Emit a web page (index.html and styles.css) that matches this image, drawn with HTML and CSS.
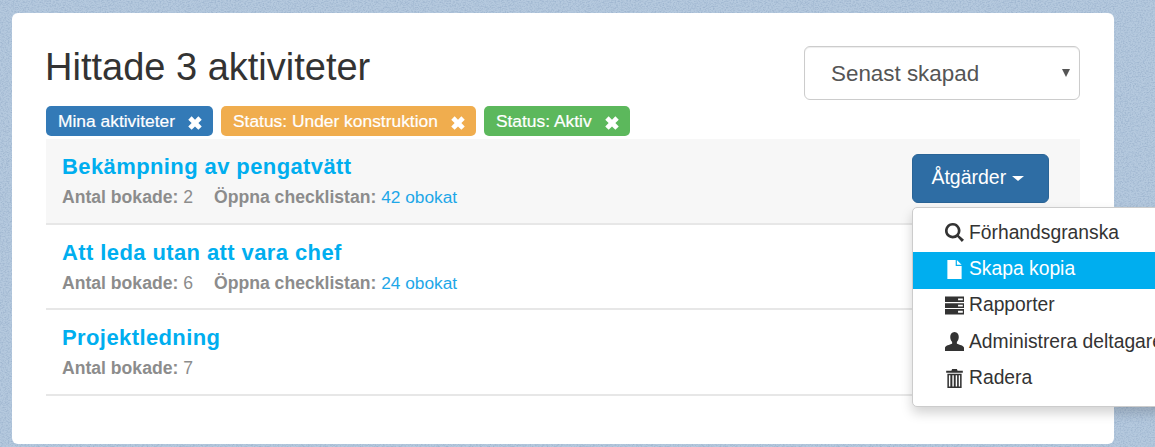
FILE: index.html
```html
<!DOCTYPE html>
<html lang="sv">
<head>
    <meta charset="UTF-8">
    <meta name="viewport" content="width=device-width, initial-scale=1.0">
    <title>Aktiviteter</title>
    <link rel="stylesheet" href="styles.css">
</head>
<body>
    <div class="card">
        <div class="top">
            <h1>Hittade 3 aktiviteter</h1>
            <div class="sort">
                <select>
                    <option>Senast skapad</option>
                </select>
            </div>
        </div>

        <div class="tags">
            <span class="tag tag-blue">Mina aktiviteter <svg class="x" viewBox="0 0 16 16"><path d="M2 5l3-3 3 3 3-3 3 3-3 3 3 3-3 3-3-3-3 3-3-3 3-3z"/></svg></span>
            <span class="tag tag-orange">Status: Under konstruktion <svg class="x" viewBox="0 0 16 16"><path d="M2 5l3-3 3 3 3-3 3 3-3 3 3 3-3 3-3-3-3 3-3-3 3-3z"/></svg></span>
            <span class="tag tag-green">Status: Aktiv <svg class="x" viewBox="0 0 16 16"><path d="M2 5l3-3 3 3 3-3 3 3-3 3 3 3-3 3-3-3-3 3-3-3 3-3z"/></svg></span>
        </div>

        <div class="list">
            <div class="row row-active">
                <div>
                    <a class="row-title" href="#">Bekämpning av pengatvätt</a>
                    <div class="meta">
                        <span><b>Antal bokade:</b> 2</span>
                        <span><b>Öppna checklistan:</b> <a href="#">42 obokat</a></span>
                    </div>
                </div>
                <button class="actions">Åtgärder <i class="caret"></i></button>
            </div>
            <div class="row">
                <div>
                    <a class="row-title" href="#">Att leda utan att vara chef</a>
                    <div class="meta">
                        <span><b>Antal bokade:</b> 6</span>
                        <span><b>Öppna checklistan:</b> <a href="#">24 obokat</a></span>
                    </div>
                </div>
            </div>
            <div class="row">
                <div>
                    <a class="row-title" href="#">Projektledning</a>
                    <div class="meta">
                        <span><b>Antal bokade:</b> 7</span>
                    </div>
                </div>
            </div>
        </div>
    </div>

    <!-- Open dropdown -->
    <ul class="menu">
        <li>
            <svg viewBox="0 0 16 16"><path fill-rule="evenodd" d="M6.500 0a6.500 6.500 0 0 1 5.200 10.400l4.300 3.800-1.800 1.800-3.800-4.300A6.500 6.500 0 1 1 6.500 0zm0 2.200a4.300 4.300 0 1 0 0 8.600 4.300 4.300 0 0 0 0-8.600z"/></svg>
            Förhandsgranska
        </li>
        <li class="active">
            <svg viewBox="0 0 16 16"><path d="M2 0h7v5h5v11H2zM10 0l4 4h-4z"/></svg>
            Skapa kopia
        </li>
        <li>
            <svg viewBox="0 0 16 16"><path fill-rule="evenodd" d="M0 .5h16v4.500H0zm11 1.500v1.500h4V2zM0 6h16v4H0zm11 1.300v1.500h4V7.300zM0 11h16v4.500H0zm11 1.500V14h4v-1.500z"/></svg>
            Rapporter
        </li>
        <li>
            <svg viewBox="0 0 16 16"><path d="M8 0c2.400 0 3.600 1.800 3.600 4.200 0 1.800-.8 3.400-1.600 4.200v1.400c2 .8 6 1.600 6 3.400V16H0v-2.800c0-1.800 4-2.600 6-3.400V8.400C5.200 7.600 4.400 6 4.400 4.200 4.400 1.800 5.600 0 8 0z"/></svg>
            Administrera deltagare
        </li>
        <li>
            <svg viewBox="0 0 16 16"><path fill-rule="evenodd" d="M6 0h4l.6 1.500H15V3.200H1V1.500h4.400zM2 4h12v12H2zm1.300 1.300v9.400h1.200V5.300zm2.900 0v9.400h1.200V5.300zm2.800 0v9.400h1.200V5.300zm2.600 0v9.400h1.100V5.300z"/></svg>
            Radera
        </li>
    </ul>
</body>
</html>
```

FILE: styles.css
```css
html, body {
    height: 100%;
}

body {
    margin: 0;
    overflow: hidden;
    position: relative;
    font-family: "Liberation Sans", Arial, sans-serif;
    color: #333;
    background-color: #b5c9de;
    background-image:
        url("data:image/svg+xml,%3Csvg xmlns='http://www.w3.org/2000/svg' width='400' height='400'%3E%3Cfilter id='n' x='0' y='0' width='100%25' height='100%25'%3E%3CfeTurbulence type='fractalNoise' baseFrequency='.6 .8' numOctaves='3' stitchTiles='stitch'/%3E%3CfeColorMatrix values='0 0 0 0 .35 0 0 0 0 .47 0 0 0 0 .63 2.500 0 0 0 -1'/%3E%3C/filter%3E%3Crect width='400' height='400' filter='url(%23n)'/%3E%3C/svg%3E");
}

.card {
    box-sizing: border-box;
    width: 1102px;
    height: 431px;
    margin-left: 12px;
    position: relative;
    top: 13px;
    padding: 33px 34px 0 34px;
    background-color: #fff;
    border-radius: 6px;
}

.top {
    display: flex;
    justify-content: space-between;
    align-items: flex-start;
    height: 60px;
}

h1 {
    margin: 0 0 0 -1px;
    font-size: 38px;
    line-height: 42px;
    font-weight: 400;
}

.sort {
    position: relative;
}

.sort::after {
    content: "";
    position: absolute;
    right: 10px;
    top: 23px;
    border-left: 4px solid transparent;
    border-right: 4px solid transparent;
    border-top: 8px solid #555;
}

select {
    display: block;
    box-sizing: border-box;
    width: 276px;
    height: 54px;
    padding: 0 0 0 26px;
    appearance: none;
    background: #fff;
    border: 1px solid #ccc;
    border-radius: 6px;
    color: #555;
    font-family: inherit;
    font-size: 22.400px;
    box-shadow: inset 0 1px 1px rgba(0, 0, 0, 0.075);
}

.tags {
    display: flex;
    gap: 8px;
    height: 33px;
}

.tag {
    box-sizing: border-box;
    height: 30px;
    padding: 0 9px 0 12px;
    display: flex;
    align-items: center;
    gap: 11px;
    border-radius: 5px;
    color: #fff;
    font-size: 17.400px;
    font-weight: 400;
    -webkit-text-stroke: 0.2px #fff;
}

.tag-blue { background-color: #337ab7; }
.tag-orange { background-color: #f0ad4e; }
.tag-green { background-color: #5cb85c; }

.x {
    width: 18px;
    height: 18px;
    margin-top: 3px;
    fill: #fff;
}

.list {
    width: 1034px;
}

.row {
    box-sizing: border-box;
    height: 85.500px;
    padding: 16px 31px 0 16px;
    display: flex;
    justify-content: space-between;
    align-items: flex-start;
    border-bottom: 2px solid #e7e7e7;
}

.row-active {
    background-color: #f7f7f7;
}

.row-title {
    display: block;
    color: #00aeef;
    text-decoration: none;
    font-size: 22px;
    line-height: 24px;
    font-weight: 700;
    letter-spacing: 0.4px;
}

.meta {
    display: flex;
    gap: 21px;
    margin-top: 9px;
    font-size: 17.600px;
    line-height: 18px;
    color: #8c8c8c;
}

.meta a {
    font-size: 17.300px;
    color: #1ea7e8;
    text-decoration: none;
}

.actions {
    box-sizing: border-box;
    width: 137px;
    height: 49px;
    margin-top: -1px;
    padding: 0 6px 2px 0;
    background-color: #2e6da4;
    border: 1px solid #2a6496;
    border-radius: 6px;
    color: #fff;
    font-family: inherit;
    font-size: 19.500px;
    cursor: pointer;
}

.caret {
    display: inline-block;
    vertical-align: middle;
    border-left: 6px solid transparent;
    border-right: 6px solid transparent;
    border-top: 5px solid #fff;
}

.menu {
    position: absolute;
    left: 912px;
    top: 207px;
    width: 300px;
    margin: 0;
    padding: 8px 0;
    list-style: none;
    background-color: #fff;
    border: 1px solid #ccc;
    border-radius: 5px;
    box-shadow: 0 6px 12px rgba(0, 0, 0, 0.175);
    font-size: 19.300px;
}

.menu li {
    display: flex;
    align-items: center;
    gap: 5px;
    height: 36.400px;
    padding-left: 32px;
    padding-bottom: 3px;
    box-sizing: border-box;
    color: #333;
    white-space: nowrap;
}

.menu li.active {
    background-color: #00aeef;
    color: #fff;
}

.menu svg {
    width: 19px;
    height: 19px;
    fill: currentColor;
    flex: none;
}
```
